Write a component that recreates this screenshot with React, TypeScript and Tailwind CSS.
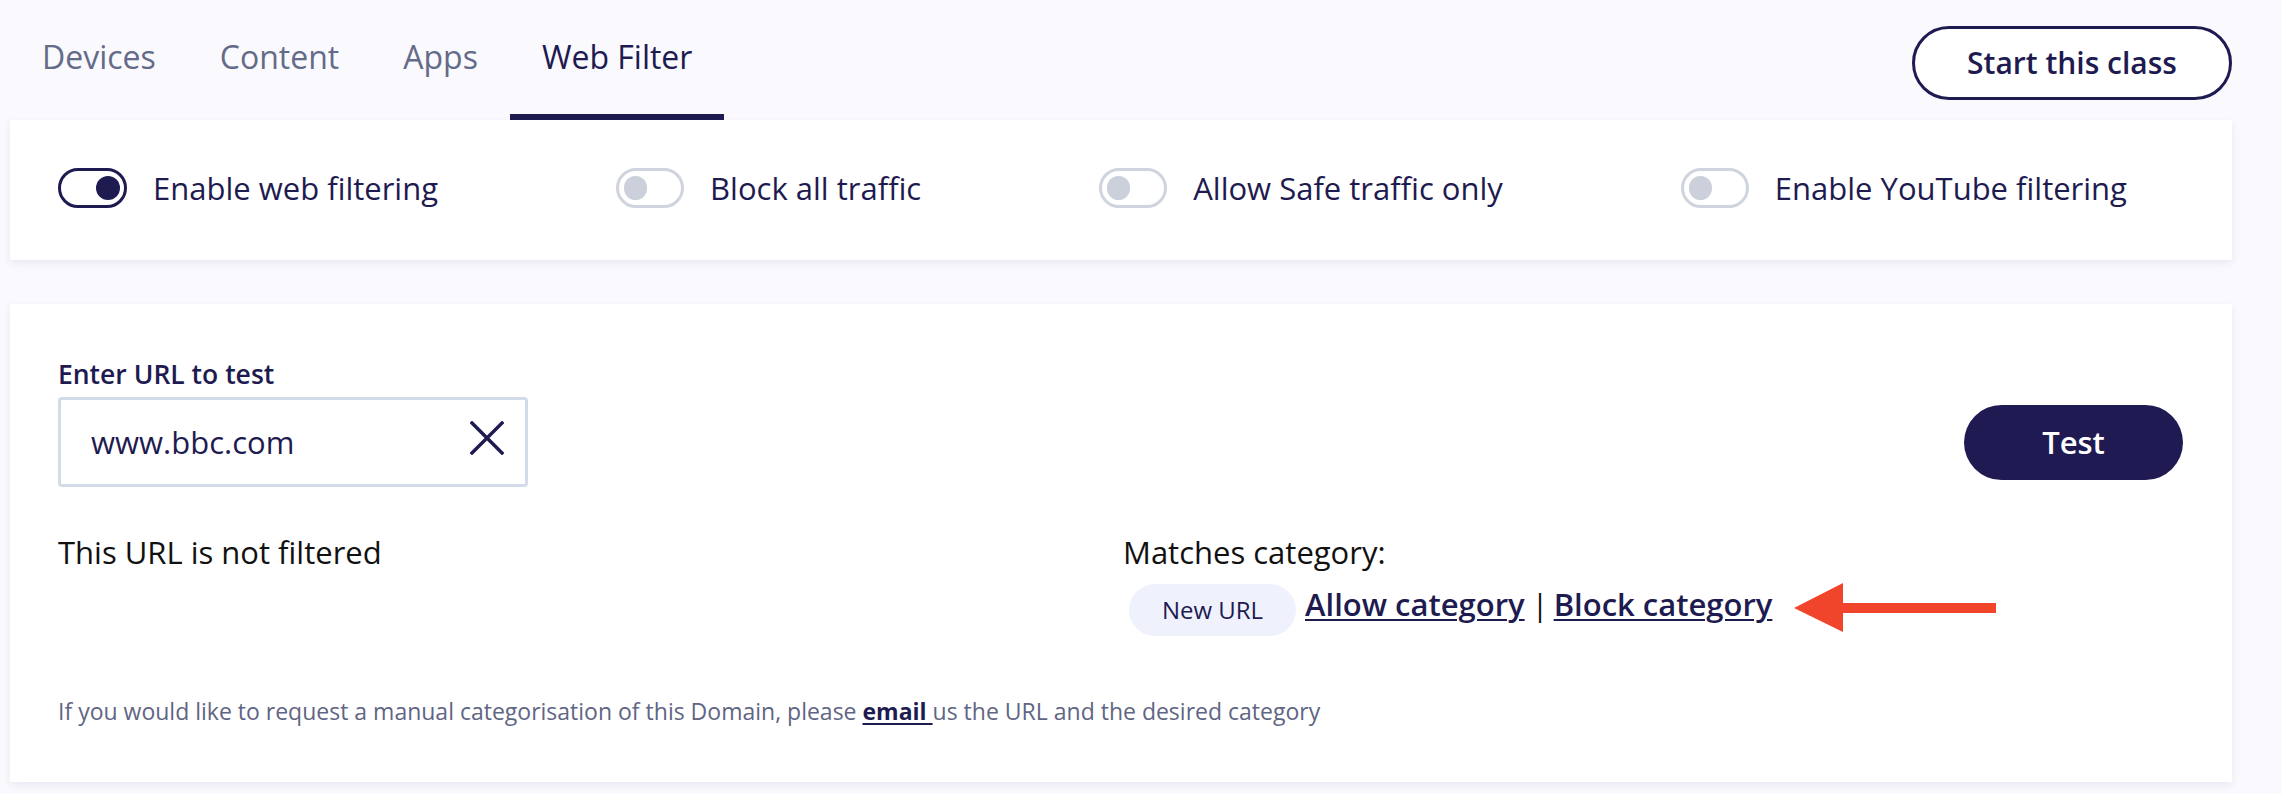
import React from "react";

function Toggle({ on }: { on: boolean }) {
  if (on) {
    return (
      <div className="w-[69px] h-[40px] shrink-0 rounded-full border-[3px] border-[#1e1b50] bg-white flex items-center justify-end pr-[4px]">
        <div className="w-[24px] h-[24px] rounded-full bg-[#1e1b50]" />
      </div>
    );
  }
  return (
    <div className="w-[68px] h-[40px] shrink-0 rounded-full border-[3px] border-[#cfd4de] bg-white flex items-center justify-start pl-[5px]">
      <div className="w-[23px] h-[24px] rounded-full bg-[#cbd0db]" />
    </div>
  );
}

function ToggleItem({ on, label }: { on: boolean; label: string }) {
  return (
    <div className="flex items-center gap-[26px]">
      <Toggle on={on} />
      <span className="text-[31px] leading-[40px] text-[#1e1b50] whitespace-nowrap">{label}</span>
    </div>
  );
}

export default function App() {
  const tabs = ["Devices", "Content", "Apps", "Web Filter"];
  return (
    <div className="min-h-[794px] w-full bg-[#f9f9fe] font-['Open_Sans',sans-serif] pl-[10px] pr-[50px]">
      {/* Header */}
      <div className="flex justify-between items-start h-[120px]">
        <div className="flex">
          {tabs.map((t) => {
            const active = t === "Web Filter";
            return (
              <div
                key={t}
                className={
                  "px-[32px] pt-[37px] h-[120px] border-b-[6px] " +
                  (active ? "border-[#1e1b50]" : "border-transparent")
                }
              >
                <span
                  className={
                    "block text-[32px] leading-[40px] font-medium whitespace-nowrap " +
                    (active ? "text-[#1e1b50]" : "text-[#646b88]")
                  }
                >
                  {t}
                </span>
              </div>
            );
          })}
        </div>
        <button className="mt-[26px] w-[320px] h-[74px] rounded-full border-[3px] border-[#1e1b50] bg-white text-[#1e1b50] text-[30px] font-semibold leading-none">
          Start this class
        </button>
      </div>

      {/* Toggles card */}
      <div className="h-[140px] bg-white shadow-[0_3px_8px_rgba(40,40,110,0.08)] flex items-center justify-between pl-[48px] pr-[105px] pb-[4px]">
        <ToggleItem on={true} label="Enable web filtering" />
        <ToggleItem on={false} label="Block all traffic" />
        <ToggleItem on={false} label="Allow Safe traffic only" />
        <ToggleItem on={false} label="Enable YouTube filtering" />
      </div>

      {/* Test card */}
      <div className="mt-[44px] h-[478px] bg-white shadow-[0_3px_8px_rgba(40,40,110,0.08)] pl-[48px] pr-[49px] pt-[54px]">
        <div className="text-[26.5px] leading-[32px] font-semibold text-[#1e1b50]">Enter URL to test</div>
        <div className="mt-[7px] flex items-center justify-between">
          <div className="w-[470px] h-[90px] border-[3px] border-[#d3dbe8] rounded-[4px] flex items-center justify-between pl-[30px] pr-[21px]">
            <span className="text-[31px] leading-[40px] text-[#1e1b50]">www.bbc.com</span>
            <svg width="34" height="34" viewBox="0 0 34 34" className="-mt-[8px]">
              <path d="M2 2 L32 32 M32 2 L2 32" stroke="#1e1b50" strokeWidth="3.4" strokeLinecap="square" />
            </svg>
          </div>
          <button className="w-[219px] h-[75px] rounded-full bg-[#1f1b52] text-white text-[31px] font-semibold leading-none">
            Test
          </button>
        </div>

        <div className="mt-[45px] flex">
          <div className="w-[1065px] shrink-0 text-[31px] leading-[40px] text-[#111111]">This URL is not filtered</div>
          <div className="flex flex-col">
            <div className="text-[31px] leading-[40px] text-[#111111]">Matches category:</div>
            <div className="mt-[12px] flex items-start">
              <span className="ml-[6px] w-[167px] h-[52px] rounded-full bg-[#eff2fc] flex items-center justify-center text-[24px] text-[#1e1b50]">
                New URL
              </span>
              <span className="ml-[9px] flex text-[31px] leading-[40px] whitespace-nowrap">
                <a className="font-semibold text-[#1e1b50] underline underline-offset-[3px] decoration-[2px]">Allow category</a>
                <span className="ml-[7px] mr-[5px] text-[#111111]">|</span>
                <a className="font-semibold text-[#1e1b50] underline underline-offset-[3px] decoration-[2px]">Block category</a>
              </span>
              <svg width="202" height="50" viewBox="0 0 202 50" className="ml-[22px] -mt-[1px]">
                <polygon points="0,25 49,0 49,49" fill="#f0452a" />
                <rect x="47" y="20" width="155" height="10" fill="#f0452a" />
              </svg>
            </div>
          </div>
        </div>

        <div className="mt-[59px] text-[23px] leading-[32px] text-[#5f6584] whitespace-nowrap">
          If you would like to request a manual categorisation of this Domain, please{" "}
          <a className="font-bold text-[#1e1b50] underline underline-offset-[3px]">email </a>us the URL and the desired category
        </div>
      </div>
    </div>
  );
}
